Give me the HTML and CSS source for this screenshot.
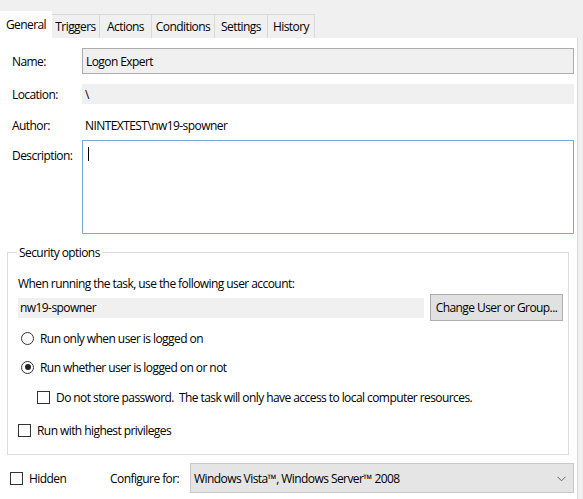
FILE: index.html
```html
<!DOCTYPE html>
<html>
<head>
<meta charset="utf-8">
<link rel="stylesheet" href="styles.css">
</head>
<body>
<div class="tabs">
  <div class="tab active">General</div>
  <div class="tab tab-triggers">Triggers</div>
  <div class="tab tab-actions">Actions</div>
  <div class="tab tab-conditions">Conditions</div>
  <div class="tab tab-settings">Settings</div>
  <div class="tab tab-history">History</div>
</div>
<div class="panel">
  <div class="row row-name">
    <div class="label">Name:</div>
    <div class="field field-name">Logon Expert</div>
  </div>
  <div class="row row-loc">
    <div class="label">Location:</div>
    <div class="field field-loc">\</div>
  </div>
  <div class="row row-author">
    <div class="label">Author:</div>
    <div class="value">NINTEXTEST\nw19-spowner</div>
  </div>
  <div class="row row-desc">
    <div class="label">Description:</div>
    <div class="field field-desc"><span class="caret"></span></div>
  </div>
  <fieldset class="group">
    <legend>Security options</legend>
    <div class="line">When running the task, use the following user account:</div>
    <div class="account">
      <div class="account-box">nw19-spowner</div>
      <div class="button">Change User or Group...</div>
    </div>
    <div class="opt opt-r1"><span class="radio"></span>Run only when user is logged on</div>
    <div class="opt opt-r2"><span class="radio checked"></span>Run whether user is logged on or not</div>
    <div class="opt opt-c1"><span class="check"></span>Do not store password.&nbsp; The task will only have access to local computer resources.</div>
    <div class="opt opt-c2"><span class="check"></span>Run with highest privileges</div>
  </fieldset>
  <div class="bottom">
    <div class="opt hidden"><span class="check"></span>Hidden</div>
    <div class="cfg-label">Configure for:</div>
    <div class="combo">Windows Vista™, Windows Server™ 2008
      <svg class="chev" width="9" height="6" viewBox="0 0 9 6"><path d="M0.5 0.8 L4.5 4.8 L8.5 0.8" fill="none" stroke="#606060" stroke-width="1"/></svg>
    </div>
  </div>
</div>
</body>
</html>
```
FILE: styles.css
```css
* { box-sizing: border-box; }
html, body { margin: 0; padding: 0; }
body {
  width: 583px;
  height: 499px;
  overflow: hidden;
  background: #f0f0f0;
  font-family: "Open Sans", "Noto Sans", sans-serif;
  font-size: 12px;
  letter-spacing: -0.57px;
  color: #000;
}
.tabs {
  display: flex;
  padding-top: 14px;
  height: 38px;
  align-items: flex-end;
}
.tab {
  height: 24px;
  border: 1px solid #d9d9d9;
  border-bottom: none;
  border-left: none;
  background: #f0f0f0;
  display: flex;
  align-items: center;
  justify-content: center;
}
.tab-triggers { width: 48px; }
.tab-actions { width: 52px; }
.tab-conditions { width: 63px; }
.tab-settings { width: 53px; }
.tab-history { width: 47px; }
.tab.active {
  width: 52px;
  height: 27px;
  background: #fff;
  border: none;
}
.panel {
  width: 578px;
  height: 461px;
  background: #fff;
  border-right: 1px solid #d9d9d9;
  padding-top: 10px;
}
.row {
  display: flex;
  align-items: center;
}
.label {
  width: 82px;
  padding-left: 12px;
  flex: none;
}
.field {
  width: 492px;
  background: #f0f0f0;
  padding-left: 3px;
}
.row-name .field {
  height: 26px;
  border: 1px solid #adadad;
  display: flex;
  align-items: center;
}
.row-loc { margin-top: 10px; }
.row-loc .field {
  height: 20px;
  display: flex;
  align-items: center;
}
.row-author { margin-top: 11px; height: 20px; }
.value { padding-left: 3px; }
.row-desc { margin-top: 5px; align-items: flex-start; }
.row-desc .label { padding-top: 7px; }
.field-desc {
  height: 94px;
  background: #fff;
  border: 1px solid #7aaad9;
  padding: 6px 0 0 5px;
}
.caret {
  display: block;
  width: 1px;
  height: 14px;
  background: #000;
}
.group {
  margin: 10px 8px 0 7px;
  border: 1px solid #dcdcdc;
  padding: 0 0 0 10px;
  height: 211px;
}
.group legend {
  padding: 0 2px;
  margin-left: -1px;
}
.line { margin-top: 13px; height: 18px; display: flex; align-items: center; }
.account {
  display: flex;
  align-items: center;
  margin-top: 2px;
}
.account-box {
  width: 406px;
  height: 20px;
  background: #f0f0f0;
  padding-left: 2px;
  display: flex;
  align-items: center;
}
.button {
  margin-left: 6px;
  width: 133px;
  height: 27px;
  background: #e1e1e1;
  border: 1px solid #adadad;
  display: flex;
  align-items: center;
  justify-content: center;
}
.opt {
  display: flex;
  align-items: center;
  height: 18px;
}
.opt-r1 { margin-top: 8px; }
.opt-r2 { margin-top: 11px; }
.opt-c1 { margin-top: 12px; padding-left: 19px; }
.opt-c2 { margin-top: 15px; }
.radio {
  width: 13px;
  height: 13px;
  border: 1px solid #333;
  border-radius: 50%;
  margin-right: 6px;
  margin-left: 3px;
  position: relative;
  flex: none;
}
.radio.checked::after {
  content: "";
  position: absolute;
  left: 2.5px;
  top: 2.5px;
  width: 6px;
  height: 6px;
  border-radius: 50%;
  background: #222;
}
.check {
  width: 13px;
  height: 13px;
  border: 1px solid #333;
  margin-right: 6px;
  flex: none;
}
.bottom {
  display: flex;
  align-items: center;
  margin-top: 8px;
}
.hidden { margin-left: 10px; width: 100px; }
.cfg-label { width: 80px; }
.combo {
  width: 384px;
  height: 30px;
  background: #e5e5e5;
  border: 1px solid #c8c8c8;
  display: flex;
  align-items: center;
  padding-left: 3px;
  position: relative;
}
.chev {
  position: absolute;
  right: 7px;
  top: 12px;
}
```
